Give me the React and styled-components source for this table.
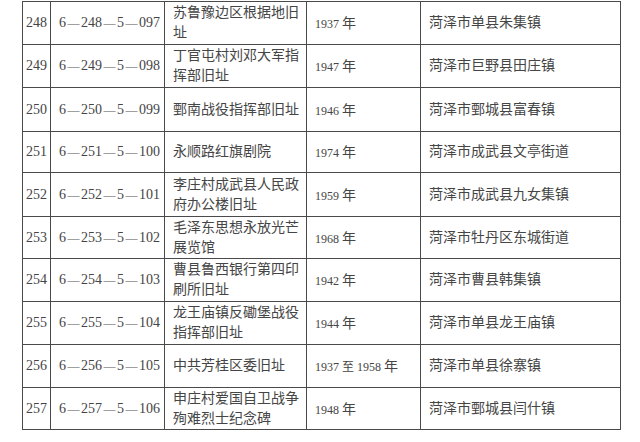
import React from "react";
import styled, { createGlobalStyle } from "styled-components";

const GlobalStyle = createGlobalStyle`
  html, body {
    margin: 0;
    padding: 0;
    background: #ffffff;
  }
  body {
    font-family: "Liberation Serif", "Noto Sans CJK SC", serif;
    color: #333;
  }
`;

const Page = styled.div`
  width: 640px;
  height: 442px;
  padding: 1px 0 0 22px;
  box-sizing: border-box;
  background: #fff;
  overflow: hidden;
`;

const Table = styled.table`
  width: 598px;
  border-collapse: collapse;
  table-layout: fixed;
  border: 1.5px solid #3c3c3c;
`;

const Col = styled.col`
  width: ${(p) => p.w}px;
`;

const Row = styled.tr`
  height: ${(p) => p.h}px;
`;

const Cell = styled.td`
  border: 1.5px solid #4a4a4a;
  padding: 0 0 0 ${(p) => p.pad ?? 8}px;
  vertical-align: middle;
  font-size: ${(p) => p.size || 14}px;
  line-height: 20px;
  color: #454545;
  white-space: ${(p) => (p.wrap ? "normal" : "nowrap")};
  word-break: break-all;
  overflow: hidden;
`;

const Dash = styled.span`
  font-size: 12px;
  margin: 0 1.5px;
  color: #555;
`;

const Nian = styled.span`
  font-size: 14px;
  font-family: "Noto Sans CJK SC", sans-serif;
`;

const rows = [
  [248, "097", "苏鲁豫边区根据地旧址", "1937", "菏泽市单县朱集镇", 43],
  [249, "098", "丁官屯村刘邓大军指挥部旧址", "1947", "菏泽市巨野县田庄镇", 43],
  [250, "099", "鄄南战役指挥部旧址", "1946", "菏泽市鄄城县富春镇", 44],
  [251, "100", "永顺路红旗剧院", "1974", "菏泽市成武县文亭街道", 41],
  [252, "101", "李庄村成武县人民政府办公楼旧址", "1959", "菏泽市成武县九女集镇", 44],
  [253, "102", "毛泽东思想永放光芒展览馆", "1968", "菏泽市牡丹区东城街道", 42],
  [254, "103", "曹县鲁西银行第四印刷所旧址", "1942", "菏泽市曹县韩集镇", 43],
  [255, "104", "龙王庙镇反磡堡战役指挥部旧址", "1944", "菏泽市单县龙王庙镇", 43],
  [256, "105", "中共芳桂区委旧址", "1937 至 1958", "菏泽市单县徐寨镇", 43],
  [257, "106", "申庄村爱国自卫战争殉难烈士纪念碑", "1948", "菏泽市鄄城县闫什镇", 42],
];

const Code = ({ no, code }) => (
  <>
    6<Dash>—</Dash>
    {no}
    <Dash>—</Dash>5<Dash>—</Dash>
    {code}
  </>
);

export default function App() {
  return (
    <Page>
      <GlobalStyle />
      <Table>
        <colgroup>
          <Col w={28} />
          <Col w={114} />
          <Col w={142} />
          <Col w={114} />
          <Col w={200} />
        </colgroup>
        <tbody>
          {rows.map(([no, code, name, year, place, h]) => (
            <Row key={no} h={h}>
              <Cell pad={3}>{no}</Cell>
              <Cell>
                <Code no={no} code={code} />
              </Cell>
              <Cell wrap>{name}</Cell>
              <Cell size={12}>
                {year} <Nian>年</Nian>
              </Cell>
              <Cell>{place}</Cell>
            </Row>
          ))}
        </tbody>
      </Table>
    </Page>
  );
}
